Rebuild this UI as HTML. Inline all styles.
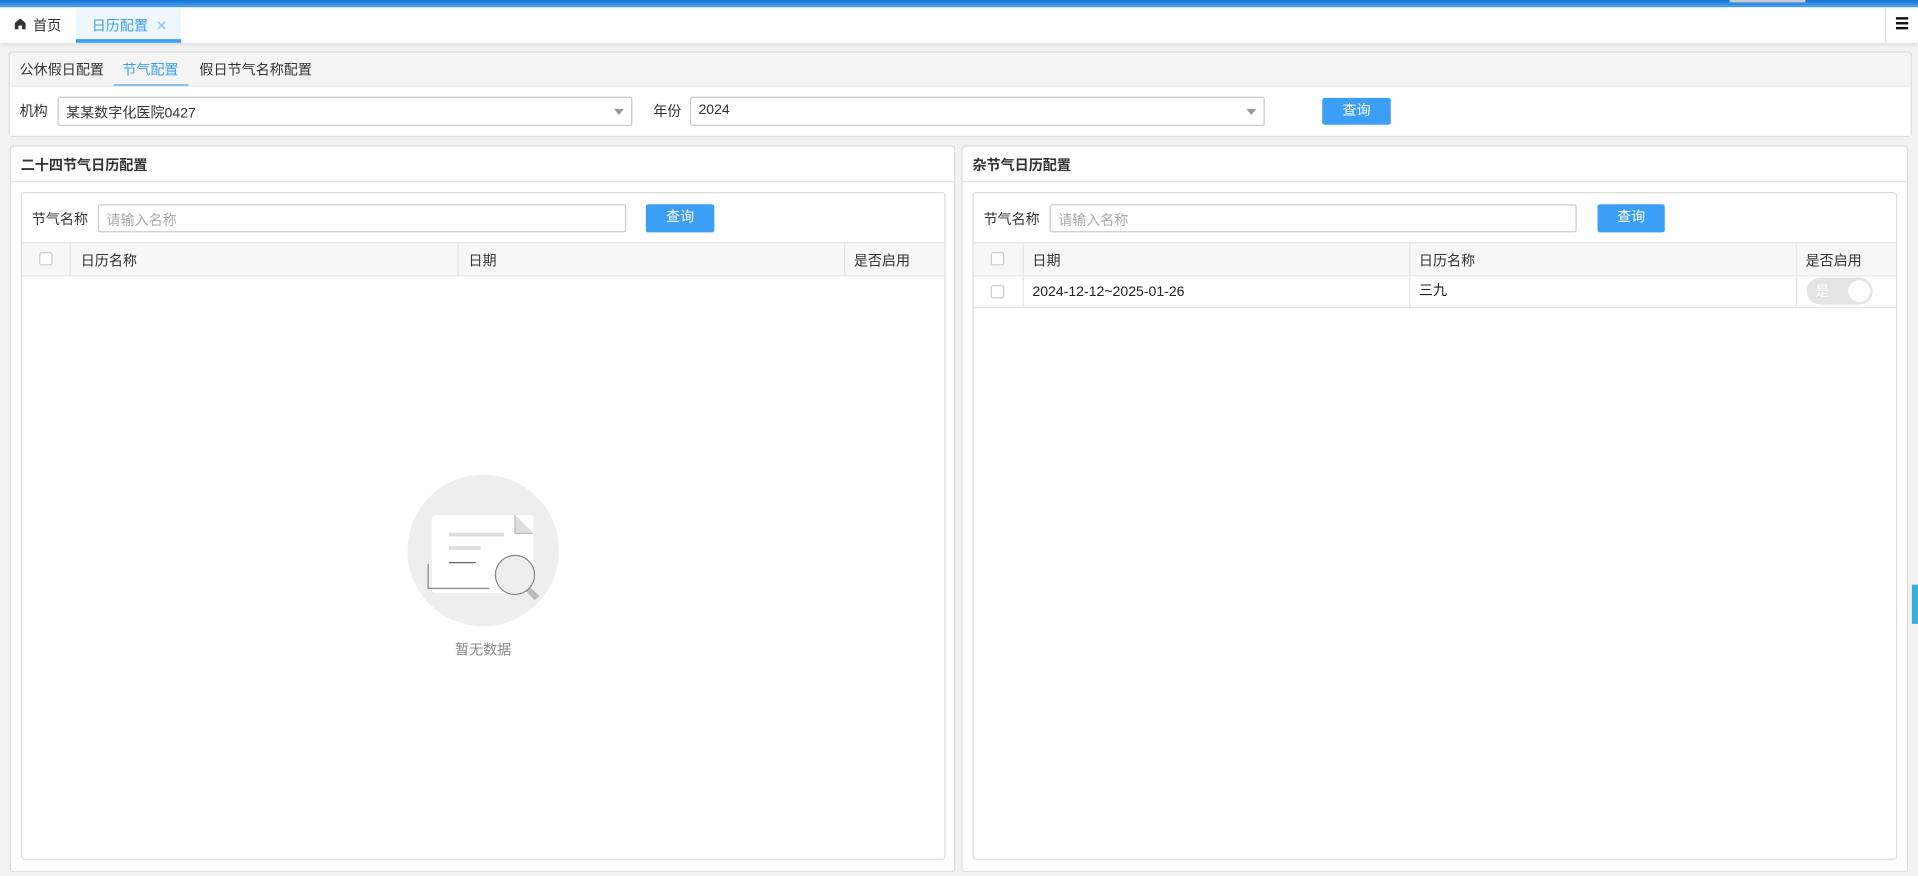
<!DOCTYPE html>
<html><head><meta charset="utf-8"><style>
*{box-sizing:border-box;margin:0;padding:0}
body{width:1918px;height:875px;overflow:hidden;background:#f2f2f2;font-family:"Liberation Sans","Noto Sans CJK SC",sans-serif;}
#s{position:absolute;left:0;top:0;width:1568px;height:716px;transform:scale(1.2232);transform-origin:0 0;font-size:11.5px;color:#333}
.a{position:absolute}
.blue{background:#3a9ff5;color:#fff;text-align:center;border-radius:2px}
.inp{background:#fff;border:1px solid #ccc;border-radius:2px}
.cb{position:absolute;width:11px;height:11px;border:1px solid #ccc;border-radius:2px;background:#fff}
</style></head><body><div id="s">
<div class="a" style="left:0;top:0;width:1568px;height:6px;background:linear-gradient(#1770d2,#4aa6f5)"></div>
<div class="a" style="left:1414px;top:0;width:62px;height:2px;background:#ccc"></div>
<div class="a" style="left:0;top:6px;width:1568px;height:29px;background:#fff;box-shadow:0 2px 3px rgba(0,0,0,.08)"></div>
<svg class="a" style="left:12px;top:15px" width="9" height="9" viewBox="0 0 9 9"><path d="M4.5 0L0 4v5h3V6h3v3h3V4z" fill="#333"/></svg>
<div class="a" style="left:27px;top:13px">首页</div>
<div class="a" style="left:62px;top:6px;width:86px;height:29px;background:#eef6fe;border-bottom:3px solid #3a9ff5;color:#3a9ff5;padding:7px 0 0 13px">日历配置 <span style="color:#8cc3f3;margin-left:3px">✕</span></div>
<div class="a" style="left:1541px;top:7px;width:1px;height:27px;background:#ddd"></div>
<div class="a" style="left:1550px;top:14px;width:10px;height:10px;border-top:2px solid #111;border-bottom:2px solid #111"><div style="margin-top:2px;height:2px;background:#111"></div></div>

<div class="a" style="left:7px;top:42px;width:1556px;height:70px;border:1px solid #ddd;border-radius:3px;background:#f5f5f5"></div>
<div class="a" style="left:16px;top:49px">公休假日配置</div>
<div class="a" style="left:93px;top:42px;width:61px;height:29px;border-bottom:2px solid #3a9ff5;color:#3a9ff5;padding:7px 0 0 7px">节气配置</div>
<div class="a" style="left:163px;top:49px">假日节气名称配置</div>
<div class="a" style="left:8px;top:70px;width:1554px;height:41px;background:#fff;border-top:1px solid #e6e6e6"></div>
<div class="a" style="left:16px;top:83px">机构</div>
<div class="a inp" style="left:47px;top:79px;width:470px;height:24px;padding:4px 6px">某某数字化医院0427</div>
<div class="a" style="left:502px;top:89px;border:4px solid transparent;border-top:5px solid #999"></div>
<div class="a" style="left:534px;top:83px">年份</div>
<div class="a inp" style="left:564px;top:79px;width:470px;height:24px;padding:4px 6px">2024</div>
<div class="a" style="left:1019px;top:89px;border:4px solid transparent;border-top:5px solid #999"></div>
<div class="a blue" style="left:1081px;top:80px;width:56px;height:22px;line-height:22px">查询</div>

<div class="a" style="left:8px;top:119px;width:773px;height:594px;background:#fff;border:1px solid #ddd;border-radius:3px"></div>
<div class="a" style="left:17px;top:127px;font-weight:bold">二十四节气日历配置</div>
<div class="a" style="left:9px;top:148px;width:771px;height:1px;background:#e6e6e6"></div>
<div class="a" style="left:17px;top:157px;width:756px;height:546px;border:1px solid #ddd;border-radius:3px"></div>
<div class="a" style="left:26px;top:171px">节气名称</div>
<div class="a inp" style="left:80px;top:167px;width:432px;height:23px;padding:4px 6px;color:#aaa">请输入名称</div>
<div class="a blue" style="left:528px;top:167px;width:56px;height:23px;line-height:23px">查询</div>
<div class="a" style="left:18px;top:198px;width:754px;height:28px;background:#f7f7f7;border-top:1px solid #e6e6e6;border-bottom:1px solid #e6e6e6"></div>
<div class="cb" style="left:32px;top:206px"></div>
<div class="a" style="left:57px;top:198px;width:1px;height:28px;background:#e6e6e6"></div>
<div class="a" style="left:374px;top:198px;width:1px;height:28px;background:#e6e6e6"></div>
<div class="a" style="left:690px;top:198px;width:1px;height:28px;background:#e6e6e6"></div>
<div class="a" style="left:66px;top:205px">日历名称</div>
<div class="a" style="left:383px;top:205px">日期</div>
<div class="a" style="left:698px;top:205px">是否启用</div>
<svg class="a" style="left:333px;top:388px" width="124" height="124" viewBox="0 0 124 124">
<circle cx="62" cy="62" r="62" fill="#eee"/>
<rect x="20" y="33" width="83" height="64" rx="3" fill="#fff"/>
<path d="M88 33l15 15H88z" fill="#ddd"/>
<path d="M88 33v15h15" fill="none" stroke="#bbb"/>
<path d="M34 49h45M34 60h26" stroke="#ddd" stroke-width="3"/>
<path d="M34 72h22" stroke="#666"/>
<path d="M17 73v20h50" fill="none" stroke="#888"/>
<path d="M96 91l10 10" stroke="#bbb" stroke-width="5"/>
<circle cx="88" cy="82" r="16" fill="#eee" stroke="#888"/>
</svg>
<div class="a" style="left:372px;top:523px;color:#888">暂无数据</div>

<div class="a" style="left:786px;top:119px;width:774px;height:594px;background:#fff;border:1px solid #ddd;border-radius:3px"></div>
<div class="a" style="left:795px;top:127px;font-weight:bold">杂节气日历配置</div>
<div class="a" style="left:787px;top:148px;width:772px;height:1px;background:#e6e6e6"></div>
<div class="a" style="left:795px;top:157px;width:756px;height:546px;border:1px solid #ddd;border-radius:3px"></div>
<div class="a" style="left:804px;top:171px">节气名称</div>
<div class="a inp" style="left:858px;top:167px;width:431px;height:23px;padding:4px 6px;color:#aaa">请输入名称</div>
<div class="a blue" style="left:1306px;top:167px;width:55px;height:23px;line-height:23px">查询</div>
<div class="a" style="left:796px;top:198px;width:754px;height:28px;background:#f7f7f7;border-top:1px solid #e6e6e6;border-bottom:1px solid #e6e6e6"></div>
<div class="a" style="left:796px;top:251px;width:754px;height:1px;background:#e6e6e6"></div>
<div class="cb" style="left:810px;top:206px"></div>
<div class="cb" style="left:810px;top:233px"></div>
<div class="a" style="left:836px;top:198px;width:1px;height:54px;background:#e6e6e6"></div>
<div class="a" style="left:1152px;top:198px;width:1px;height:54px;background:#e6e6e6"></div>
<div class="a" style="left:1468px;top:198px;width:1px;height:54px;background:#e6e6e6"></div>
<div class="a" style="left:844px;top:205px">日期</div>
<div class="a" style="left:1160px;top:205px">日历名称</div>
<div class="a" style="left:1476px;top:205px">是否启用</div>
<div class="a" style="left:844px;top:232px;color:#222;line-height:14px">2024-12-12~2025-01-26</div>
<div class="a" style="left:1160px;top:231px;color:#222;line-height:14px">三九</div>
<div class="a" style="left:1477px;top:227px;width:54px;height:22px;border-radius:11px;background:#e4e4e4;color:#fff;padding:3px 0 0 7px">是<div class="a" style="right:2px;top:2px;width:18px;height:18px;border-radius:50%;background:#fff"></div></div>
<div class="a" style="left:1563px;top:478px;width:5px;height:32px;background:#3ab0d8"></div>
</div></body></html>
